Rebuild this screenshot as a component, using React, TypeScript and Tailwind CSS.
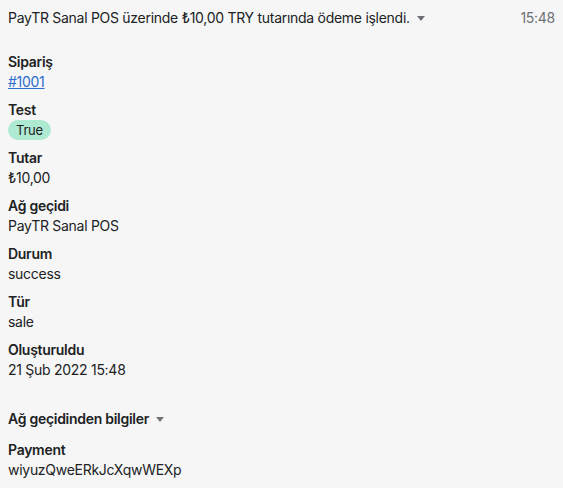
const fields: { label: string; value: React.ReactNode }[] = [
  {
    label: "Sipariş",
    value: (
      <a href="#" className="text-[#2c6ecb] underline">
        #1001
      </a>
    ),
  },
  {
    label: "Test",
    value: (
      <span className="inline-flex h-5 items-center rounded-full bg-[#aee9d1] px-2 text-[13px] leading-5 text-[#202223]">
        True
      </span>
    ),
  },
  { label: "Tutar", value: "₺10,00" },
  { label: "Ağ geçidi", value: "PayTR Sanal POS" },
  { label: "Durum", value: "success" },
  { label: "Tür", value: "sale" },
  { label: "Oluşturuldu", value: "21 Şub 2022 15:48" },
];

function Caret() {
  return (
    <svg width="8" height="5" viewBox="0 0 8 5" className="ml-[7px] inline-block">
      <path d="M0 0h8L4 5z" fill="#6d7175" />
    </svg>
  );
}

function Field({ label, value }: { label: string; value: React.ReactNode }) {
  return (
    <div className="flex flex-col items-start">
      <p className="font-semibold leading-5">{label}</p>
      <div className="leading-5">{value}</div>
    </div>
  );
}

export default function App() {
  return (
    <div
      className="min-h-screen bg-[#f6f6f7] px-2 pt-2 text-[14px] tracking-[-0.02em] text-[#202223]"
      style={{ fontFamily: "Inter, 'Noto Sans', sans-serif" }}
    >
      <div className="flex items-center justify-between leading-5">
        <div className="flex items-center">
          <span>PayTR Sanal POS üzerinde ₺10,00 TRY tutarında ödeme işlendi.</span>
          <Caret />
        </div>
        <span className="text-[#6d7175]">15:48</span>
      </div>

      <div className="mt-6 flex flex-col gap-2">
        {fields.map((f) => (
          <Field key={f.label} label={f.label} value={f.value} />
        ))}
      </div>

      <div className="mt-[29px] flex items-center font-semibold leading-5">
        Ağ geçidinden bilgiler
        <Caret />
      </div>

      <div className="mt-[11px]">
        <Field label="Payment" value="wiyuzQweERkJcXqwWEXp" />
      </div>
    </div>
  );
}
